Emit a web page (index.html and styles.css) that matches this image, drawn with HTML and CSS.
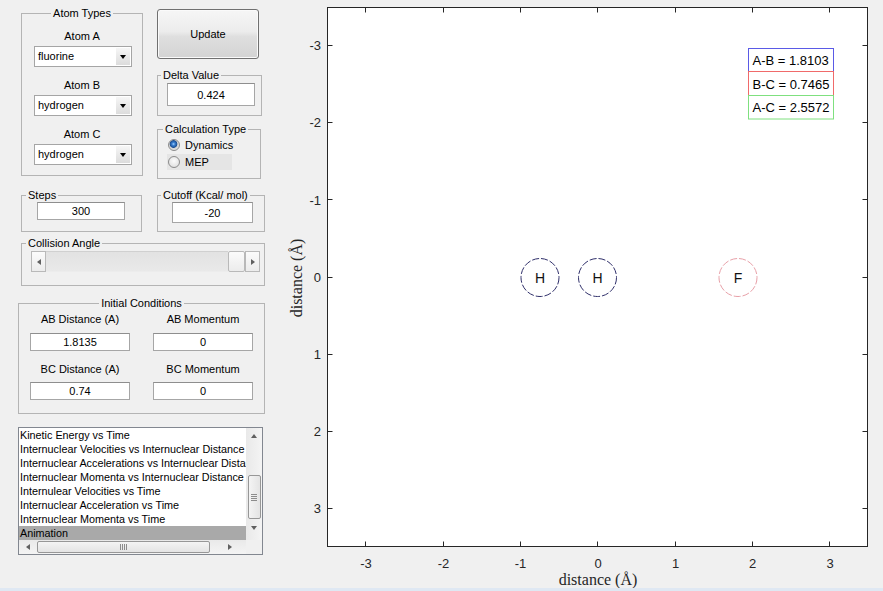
FILE: index.html
```html
<!DOCTYPE html>
<html>
<head>
<meta charset="utf-8">
<link rel="stylesheet" href="styles.css">
</head>
<body>
<div class="app">
  <div class="controls">
    <div class="row1">
      <fieldset class="grp atoms">
        <legend class="center">Atom Types</legend>
        <div class="lbl first">Atom A</div>
        <div class="select"><span class="val">fluorine</span><span class="btn"></span></div>
        <div class="lbl">Atom B</div>
        <div class="select"><span class="val">hydrogen</span><span class="btn"></span></div>
        <div class="lbl">Atom C</div>
        <div class="select"><span class="val">hydrogen</span><span class="btn"></span></div>
      </fieldset>
      <div class="rightcol">
        <button class="update">Update</button>
        <fieldset class="grp delta">
          <legend>Delta Value</legend>
          <div class="edit">0.424</div>
        </fieldset>
        <fieldset class="grp calc">
          <legend>Calculation Type</legend>
          <div class="radiorow"><span class="radio on"></span><span class="rtext">Dynamics</span></div>
          <div class="radiorow mep"><span class="radio"></span><span class="rtext">MEP</span></div>
        </fieldset>
      </div>
    </div>

    <div class="row2">
      <fieldset class="grp steps">
        <legend>Steps</legend>
        <div class="edit">300</div>
      </fieldset>
      <fieldset class="grp cutoff">
        <legend>Cutoff (Kcal/ mol)</legend>
        <div class="edit">-20</div>
      </fieldset>
    </div>

    <fieldset class="grp collision">
      <legend>Collision Angle</legend>
      <div class="slider">
        <span class="sbtn"><span class="tri-left"></span></span>
        <span class="trough"></span>
        <span class="sthumb"></span>
        <span class="sbtn"><span class="tri-right"></span></span>
      </div>
    </fieldset>

    <fieldset class="grp initial">
      <legend class="center">Initial Conditions</legend>
      <div class="icgrid">
        <div class="iccol">
          <div class="lbl">AB Distance (A)</div>
          <div class="edit e1">1.8135</div>
          <div class="lbl l2">BC Distance (A)</div>
          <div class="edit e2">0.74</div>
        </div>
        <div class="iccol">
          <div class="lbl">AB Momentum</div>
          <div class="edit e1">0</div>
          <div class="lbl l2">BC Momentum</div>
          <div class="edit e2">0</div>
        </div>
      </div>
    </fieldset>

    <div class="listbox">
      <div class="items">
        <div class="item">Kinetic Energy vs Time</div>
        <div class="item">Internuclear Velocities vs Internuclear Distance</div>
        <div class="item">Internuclear Accelerations vs Internuclear Distance</div>
        <div class="item">Internuclear Momenta vs Internuclear Distance</div>
        <div class="item">Internulear Velocities vs Time</div>
        <div class="item">Internuclear Acceleration vs Time</div>
        <div class="item">Internuclear Momenta vs Time</div>
        <div class="item sel">Animation</div>
      </div>
      <div class="vscroll">
        <span class="tri-up"></span>
        <span class="vthumb"><span class="vgrip"></span></span>
        <span class="tri-down"></span>
      </div>
      <div class="hscroll">
        <span class="tri-left"></span>
        <span class="hthumb"><span class="hgrip"></span></span>
        <span class="tri-right"></span>
      </div>
      <div class="corner"></div>
    </div>
  </div>

  <div class="plot">
    <svg width="608" height="588" viewBox="275 0 608 588" xmlns="http://www.w3.org/2000/svg">
      <rect x="327.5" y="7.5" width="540" height="539" fill="#ffffff" stroke="#262626" stroke-width="1"/>
      <g stroke="#262626" stroke-width="1">
        <path d="M365.5 546.5v-5M443.5 546.5v-5M520.5 546.5v-5M597.5 546.5v-5M675.5 546.5v-5M752.5 546.5v-5M829.5 546.5v-5"/>
        <path d="M365.5 7.5v5M443.5 7.5v5M520.5 7.5v5M597.5 7.5v5M675.5 7.5v5M752.5 7.5v5M829.5 7.5v5"/>
        <path d="M327.5 45.5h5M327.5 122.5h5M327.5 199.5h5M327.5 277.5h5M327.5 354.5h5M327.5 431.5h5M327.5 508.5h5"/>
        <path d="M867.5 45.5h-5M867.5 122.5h-5M867.5 199.5h-5M867.5 277.5h-5M867.5 354.5h-5M867.5 431.5h-5M867.5 508.5h-5"/>
      </g>
      <g class="ticklbl" text-anchor="middle">
        <text x="366" y="567.5">-3</text>
        <text x="443.5" y="567.5">-2</text>
        <text x="520.5" y="567.5">-1</text>
        <text x="598" y="567.5">0</text>
        <text x="675.5" y="567.5">1</text>
        <text x="752.5" y="567.5">2</text>
        <text x="830" y="567.5">3</text>
      </g>
      <g class="ticklbl" text-anchor="end">
        <text x="321" y="50">-3</text>
        <text x="321" y="127">-2</text>
        <text x="321" y="204.5">-1</text>
        <text x="321" y="282">0</text>
        <text x="321" y="359">1</text>
        <text x="321" y="436">2</text>
        <text x="321" y="513">3</text>
      </g>
      <text class="axlbl" x="598" y="585" text-anchor="middle">distance (Å)</text>
      <text class="axlbl" transform="translate(302 278) rotate(-90)" text-anchor="middle">distance (Å)</text>

      <circle cx="540" cy="277.5" r="19" fill="none" stroke="#2f2f6a" stroke-width="1" stroke-dasharray="7 2"/>
      <circle cx="597.5" cy="277.5" r="19" fill="none" stroke="#2f2f6a" stroke-width="1" stroke-dasharray="7 2"/>
      <circle cx="738" cy="277.5" r="19" fill="none" stroke="#e8a0a8" stroke-width="1" stroke-dasharray="7 2"/>
      <g class="atomlbl" text-anchor="middle">
        <text x="540" y="282.5">H</text>
        <text x="597.5" y="282.5">H</text>
        <text x="738" y="282.5">F</text>
      </g>

      <rect x="748.5" y="48.5" width="85" height="23" fill="#ffffff" stroke="#5a5ae6"/>
      <rect x="748.5" y="71.5" width="85" height="24" fill="#ffffff" stroke="#f06a6a"/>
      <rect x="748.5" y="95.5" width="85" height="23.5" fill="#ffffff" stroke="#7fe07f"/>
      <g class="boxlbl">
        <text x="752.5" y="64.5">A-B = 1.8103</text>
        <text x="752.5" y="88.5">B-C = 0.7465</text>
        <text x="752.5" y="112">A-C = 2.5572</text>
      </g>
    </svg>
  </div>
</div>
<div class="statusbar"></div>
</body>
</html>
```

FILE: styles.css
```css
* { box-sizing: border-box; }
html, body { margin: 0; padding: 0; }
body {
  background: #f0f0f0;
  font-family: "Liberation Sans", Arial, sans-serif;
  font-size: 11px;
  color: #000;
  width: 883px;
  height: 591px;
  overflow: hidden;
}
.app { display: flex; height: 588px; }
.statusbar { height: 3px; background: #dfe8f3; }
.controls { width: 275px; flex: none; }
.plot { flex: 1; }
.plot svg { display: block; }

/* group boxes */
.grp {
  margin: 0;
  padding: 0;
  border: 1px solid #b4b4b4;
  min-width: 0;
}
.grp > legend {
  padding: 0 2px;
  line-height: 13px;
  height: 13px;
  margin-left: 3px;
  font-size: 11px;
}
.grp > legend.center { margin-left: auto; margin-right: auto; }

.lbl { line-height: 13px; height: 13px; text-align: center; white-space: nowrap; }

.edit {
  background: #fff;
  border: 1px solid #a6a6a6;
  border-top-color: #8e8e8e;
  text-align: center;
  display: flex;
  align-items: center;
  justify-content: center;
}

/* row 1 */
.row1 { display: flex; align-items: flex-start; margin-top: 7px; }
.atoms { margin-left: 21px; width: 122px; height: 169px; }
.atoms .lbl { margin-top: 12px; }
.atoms .lbl.first { margin-top: 10px; }
.atoms .select { margin: 3px 0 0 12px; width: 98px; }

.select {
  display: flex;
  height: 21px;
  border: 1px solid #a5a5a5;
  background: #fff;
}
.select .val { flex: 1; padding-left: 3px; line-height: 19px; }
.select .btn {
  width: 14px;
  margin: 1px;
  background: linear-gradient(#f6f6f6, #dcdcdc);
  display: flex;
  align-items: center;
  justify-content: center;
}
.select .btn::after {
  content: "";
  border-left: 3.5px solid transparent;
  border-right: 3.5px solid transparent;
  border-top: 4px solid #000;
}

.rightcol {
  margin-left: 14px;
  width: 105px;
  display: flex;
  flex-direction: column;
  align-items: flex-start;
}
.update {
  margin: 2px 0 0 0;
  padding: 0;
  width: 102px;
  height: 50px;
  border: 1px solid #707070;
  border-radius: 3px;
  background: linear-gradient(#f6f6f6 0%, #ececec 45%, #dfdfdf 55%, #d3d3d3 100%);
  box-shadow: inset 0 0 0 1px #fafafa;
  font: 11px "Liberation Sans", Arial, sans-serif;
  color: #000;
}
.delta { margin-top: 10px; width: 105px; height: 47px; }
.delta .edit { margin: 1px 0 0 9px; width: 88px; height: 23px; }
.calc { margin-top: 7px; width: 104px; height: 56px; }
.calc > legend { margin-left: 5px; }
.radiorow {
  display: flex;
  align-items: center;
  height: 16px;
  margin: 1px 0 0 9px;
  width: 65px;
}
.radiorow.mep { background: #e5e5e5; }
.radio {
  width: 12px;
  height: 12px;
  border-radius: 50%;
  border: 1px solid #8b8b8b;
  background: radial-gradient(circle at 50% 40%, #fbfbfb, #d9d9d9);
  margin: 0 1px;
  flex: none;
}
.radio.on {
  background: radial-gradient(circle at 45% 40%, #a6d4ff 0, #3a80d2 1.5px, #1d4f92 3.5px, #d4d4d4 4.2px, #f3f3f3 100%);
}
.rtext { margin-left: 4px; }

/* row 2 */
.row2 { display: flex; margin-top: 10px; }
.steps { margin-left: 21px; width: 121px; height: 43px; }
.steps > legend { margin-left: 4px; }
.steps .edit { margin-left: 15px; width: 88px; height: 18px; }
.cutoff { margin-left: 15px; width: 108px; height: 43px; }
.cutoff .edit { margin-left: 14px; width: 81px; height: 21px; }

/* collision */
.collision { margin: 5px 0 0 21px; width: 244px; height: 49px; }
.collision > legend { margin-left: 4px; }
.slider {
  display: flex;
  margin: 1px 0 0 9px;
  width: 229px;
  height: 21px;
}
.sbtn, .sthumb {
  width: 15px;
  background: linear-gradient(#fbfbfb, #ececec);
  border: 1px solid #b9b9b9;
  display: flex;
  align-items: center;
  justify-content: center;
  flex: none;
}
.sthumb { width: 17px; border-radius: 2px; }
.trough {
  flex: 1;
  background: linear-gradient(#e2e2e2, #e9e9e9);
  border-top: 1px solid #d0d0d0;
  border-bottom: 1px solid #ececec;
}
.tri-left, .tri-right, .tri-up, .tri-down { display: block; width: 0; height: 0; flex: none; }
.tri-left { border-top: 3.5px solid transparent; border-bottom: 3.5px solid transparent; border-right: 4px solid #606060; }
.tri-right { border-top: 3.5px solid transparent; border-bottom: 3.5px solid transparent; border-left: 4px solid #606060; }
.tri-up { border-left: 3.5px solid transparent; border-right: 3.5px solid transparent; border-bottom: 4px solid #606060; }
.tri-down { border-left: 3.5px solid transparent; border-right: 3.5px solid transparent; border-top: 4px solid #606060; }

/* initial conditions */
.initial { margin: 11px 0 0 18px; width: 247px; height: 117px; }
.icgrid {
  display: grid;
  grid-template-columns: 100px 100px;
  column-gap: 23px;
  margin: 3px 0 0 11px;
}
.iccol .edit { height: 18px; }
.iccol .e1 { margin-top: 7px; }
.iccol .l2 { margin-top: 12px; }
.iccol .e2 { margin-top: 6px; }

/* listbox */
.listbox {
  margin: 13px 0 0 18px;
  width: 245px;
  height: 128px;
  border: 1px solid #828790;
  background: #fff;
  display: grid;
  grid-template-columns: 227px 16px;
  grid-template-rows: 112px 14px;
}
.items { overflow: hidden; }
.item {
  font-size: 10.8px;
  line-height: 14px;
  height: 14px;
  padding-left: 1px;
  white-space: nowrap;
  overflow: hidden;
}
.item.sel { background: #a9a9a9; }
.vscroll {
  background: linear-gradient(to right, #e9e9e9, #f4f4f4);
  display: flex;
  flex-direction: column;
  align-items: center;
}
.vscroll .tri-up { margin-top: 6px; }
.vthumb {
  margin-top: 37px;
  width: 13px;
  height: 44px;
  border: 1px solid #979797;
  border-radius: 2px;
  background: linear-gradient(to right, #f4f4f4, #e4e4e4);
  display: flex;
  align-items: center;
  justify-content: center;
  flex: none;
}
.vgrip {
  width: 6px;
  height: 7px;
  background: repeating-linear-gradient(#8c8c8c 0 1px, transparent 1px 2px);
}
.vscroll .tri-down { margin-top: 7px; }
.hscroll {
  background: linear-gradient(#e9e9e9, #f4f4f4);
  display: flex;
  align-items: center;
}
.hscroll .tri-left { margin-left: 7px; }
.hthumb {
  margin-left: 7px;
  width: 173px;
  height: 12px;
  border: 1px solid #979797;
  border-radius: 2px;
  background: linear-gradient(#f4f4f4, #e4e4e4);
  display: flex;
  align-items: center;
  justify-content: center;
  flex: none;
}
.hgrip {
  width: 7px;
  height: 6px;
  background: repeating-linear-gradient(to right, #8c8c8c 0 1px, transparent 1px 2px);
}
.hscroll .tri-right { margin-left: 18px; }
.corner { background: #f0f0f0; }

/* plot text */
.ticklbl { font-family: "Liberation Sans", Arial, sans-serif; font-size: 13px; fill: #262626; }
.axlbl { font-family: "Liberation Serif", "Times New Roman", serif; font-size: 16px; fill: #262626; }
.atomlbl { font-family: "Liberation Sans", Arial, sans-serif; font-size: 14px; fill: #111; }
.boxlbl { font-family: "Liberation Sans", Arial, sans-serif; font-size: 13px; fill: #000; }
```
